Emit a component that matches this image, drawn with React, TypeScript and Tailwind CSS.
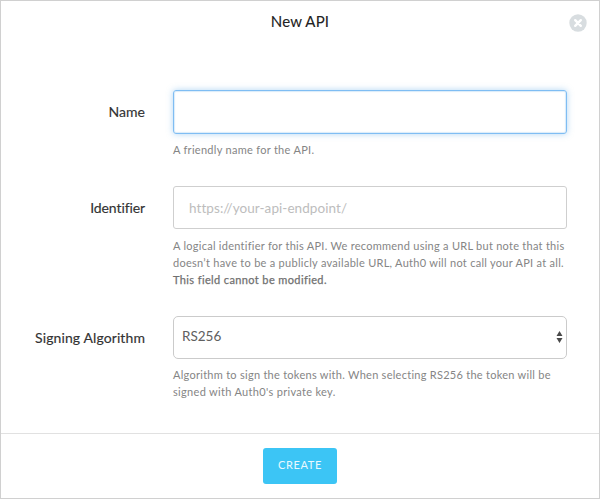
import type { ReactNode } from "react";

function Row({ label, className, labelClass, children }: { label: string; className: string; labelClass: string; children: ReactNode }) {
  return (
    <div className={`flex ${className}`}>
      <label className={`w-[144px] shrink-0 text-right text-[14px] text-[#333] [-webkit-text-stroke:0.15px_#333] ${labelClass}`}>
        {label}
      </label>
      <div className="ml-[28px] w-[394px]">{children}</div>
    </div>
  );
}

function Help({ className, children }: { className: string; children: ReactNode }) {
  return <div className={`whitespace-nowrap text-[11px] leading-[17px] text-[#858585] ${className}`}>{children}</div>;
}

export default function App() {
  return (
    <div className="flex h-[499px] w-[600px] flex-col overflow-hidden border border-[#d0d0d0] bg-white font-[Lato,sans-serif]">
      <header className="relative h-[89px] shrink-0">
        <h1 className="pt-[10px] text-center text-[15px] leading-[21px] tracking-[0.15px] text-[#222] [-webkit-text-stroke:0.1px_#222]">
          New API
        </h1>
        <button aria-label="Close" className="absolute top-[13px] right-[12px]">
          <svg width="18" height="18" viewBox="0 0 18 18">
            <circle cx="9" cy="9" r="8.7" fill="#d8dde0" />
            <path d="M6.2 6.2l5.6 5.6M11.8 6.2l-5.6 5.6" stroke="#fff" strokeWidth="2.4" strokeLinecap="round" />
          </svg>
        </button>
      </header>
      <main className="flex h-[343px] shrink-0 flex-col">
        <Row label="Name" className="h-[96px]" labelClass="leading-[44px] tracking-[0.05px]">
          <input className="block h-[44px] w-full rounded-[3px] border border-[#7fbdf3] shadow-[0_0_6px_rgba(102,175,233,0.5),inset_0_0_1px_1px_rgba(102,175,233,0.25)] outline-none" />
          <Help className="mt-[7px]">
            <span className="tracking-[0.29px]">A friendly name for the API.</span>
          </Help>
        </Row>
        <Row label="Identifier" className="h-[130px]" labelClass="leading-[43px] tracking-[-0.1px]">
          <input
            placeholder="https://your-api-endpoint/"
            className="block h-[43px] w-full rounded-[3px] border border-[#cfcfcf] px-[15px] text-[13.5px] tracking-[0.07px] outline-none placeholder:text-[#bdbdbd]"
          />
          <Help className="mt-2">
            <div className="tracking-[0.265px]">A logical identifier for this API. We recommend using a URL but note that this</div>
            <div className="tracking-[0.28px]">doesn’t have to be a publicly available URL, Auth0 will not call your API at all.</div>
            <div className="text-[#707070] tracking-[0.38px] [-webkit-text-stroke:0.25px_#707070]">This field cannot be modified.</div>
          </Help>
        </Row>
        <Row label="Signing Algorithm" className="h-[117px]" labelClass="leading-[43px] tracking-[0.1px]">
          <button className="flex h-[43px] w-full items-center justify-between rounded-[5px] border border-[#cbcbcb] pr-[3px] pb-[2px] pl-[8px] text-[13.5px] text-[#606060]">
            <span>RS256</span>
            <svg width="7" height="12" viewBox="0 0 7 12" fill="#4a4a4a" className="mt-px">
              <path d="M3.5 0L6.5 5H.5zM3.5 12L.5 7h6z" />
            </svg>
          </button>
          <Help className="mt-[7px]">
            <div className="tracking-[0.27px]">Algorithm to sign the tokens with. When selecting RS256 the token will be</div>
            <div className="tracking-[0.32px]">signed with Auth0's private key.</div>
          </Help>
        </Row>
      </main>
      <footer className="flex flex-1 justify-center border-t border-[#e1e1e1] pt-[14px]">
        <button className="h-[36px] w-[74px] rounded-[3px] bg-[#3cc5f5] pb-[2px] text-[11px] tracking-[0.65px] text-[#e9f8fe]">
          CREATE
        </button>
      </footer>
    </div>
  );
}
